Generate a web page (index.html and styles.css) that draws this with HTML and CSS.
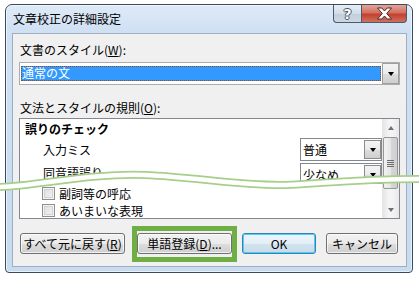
FILE: index.html
```html
<!DOCTYPE html>
<html lang="ja">
<head>
<meta charset="utf-8">
<link rel="stylesheet" href="styles.css">
</head>
<body>
<div class="window">
  <div class="titlebar">
    <span class="title">文章校正の詳細設定</span>
    <div class="caption-btns">
      <div class="cbtn help">?</div>
      <div class="cbtn close">
        <svg width="17" height="13" viewBox="0 0 17 13"><path d="M1.5 1h4.3l2.7 3L11.2 1h4.3l-4.8 5.5 4.8 5.5h-4.3L8.5 9l-2.7 3H1.5l4.8-5.5z" fill="#fff" stroke="#4a2a2a" stroke-width="1"/></svg>
      </div>
    </div>
  </div>
  <div class="client">
    <div class="label">文書のスタイル(<u>W</u>):</div>
    <div class="combo big">
      <div class="combo-field"><span class="sel">通常の文</span></div>
      <div class="combo-btn"><i class="arrow"></i></div>
    </div>
    <div class="label label2">文法とスタイルの規則(<u>O</u>):</div>
    <div class="listbox">
      <div class="list-items">
        <div class="row head">誤りのチェック</div>
        <div class="row opt">
          <span>入力ミス</span>
          <div class="combo small">
            <div class="combo-field"><span>普通</span></div>
            <div class="combo-btn"><i class="arrow"></i></div>
          </div>
        </div>
        <div class="row opt clip">
          <span>同音語誤り</span>
          <div class="combo small">
            <div class="combo-field"><span>少なめ</span></div>
            <div class="combo-btn"><i class="arrow"></i></div>
          </div>
        </div>
        <div class="row chk"><i class="checkbox"></i><span>副詞等の呼応</span></div>
        <div class="row chk last"><i class="checkbox"></i><span>あいまいな表現</span></div>
      </div>
      <div class="scrollbar">
        <div class="sb-btn"><i class="sb-up"></i></div>
        <div class="sb-track">
          <div class="sb-thumb"><i class="grip"></i></div>
        </div>
        <div class="sb-btn"><i class="sb-down"></i></div>
      </div>
    </div>
    <div class="buttons">
      <div class="btn b-reset">すべて元に戻す(<u>R</u>)</div>
      <div class="btn b-word">単語登録(<u>D</u>)...</div>
      <div class="btn b-ok">OK</div>
      <div class="btn b-cancel">キャンセル</div>
    </div>
  </div>
</div>
<svg class="wave" width="419" height="281" viewBox="0 0 419 281">
  <path d="M0 187 C40 185.5 90 173 145 175 C195 177 240 186 285 185 C320 184 350 179 419 179" fill="none" stroke="#a6d08a" stroke-width="8"/>
  <path d="M0 187 C40 185.5 90 173 145 175 C195 177 240 186 285 185 C320 184 350 179 419 179" fill="none" stroke="#ffffff" stroke-width="4.5"/>
</svg>
</body>
</html>
```
FILE: styles.css
```css
* { box-sizing: border-box; }
html, body { margin: 0; padding: 0; background: #fff; }
body {
  width: 419px; height: 281px; position: relative; overflow: hidden;
  font-family: "Noto Sans CJK JP", "Noto Sans", sans-serif;
  font-size: 12px; color: #000;
}
u { text-decoration: underline; text-underline-offset: 1px; }

.window {
  margin: 4px 0 0 5px;
  width: 408px; height: 269px;
  border: 1px solid #3b4b5c;
  border-radius: 7px 7px 4px 4px;
  background: linear-gradient(to bottom, #dfeaf7 0px, #cfe0f3 28px, #c7dbf1 100%);
  padding: 0 5px 5px 6px;
  display: flex; flex-direction: column;
  box-shadow: inset 0 0 0 1px rgba(255,255,255,0.6);
}
.titlebar {
  height: 28px; flex: none;
  display: flex; justify-content: space-between; align-items: flex-start;
}
.title { padding: 6px 0 0 1px; line-height: 16px; font-size: 12px; }
.caption-btns { display: flex; }
.cbtn {
  height: 18px; display: flex; align-items: center; justify-content: center;
  border: 1px solid #4c5a6a; border-top: none;
}
.help {
  width: 28px; border-right: none; border-radius: 0 0 0 4px;
  background: linear-gradient(to bottom, #e6edf5 0%, #d3dde8 50%, #c2cedb 51%, #cdd8e4 100%);
  color: #fff; font-weight: bold; font-size: 14px; font-family: "DejaVu Sans", sans-serif;
  text-shadow: -1px 0 #4a5560, 1px 0 #4a5560, 0 -1px #4a5560, 0 1px #4a5560;
}
.close {
  width: 46px; border-radius: 0 0 4px 0;
  background: linear-gradient(to bottom, #e2a597 0%, #d46f61 45%, #c2412f 55%, #d0705c 100%);
}

.client {
  flex: 1;
  border: 1px solid #9eaebf;
  background: #f0f0f0;
  padding: 8px 6px 0 6px;
}
.label { line-height: 16px; height: 16px; padding-left: 1px; }
.label2 { margin-top: 15px; }

.combo { display: flex; border: 1px solid #abadb3; background: #fff; }
.big { margin-top: 4px; height: 23px; }
.combo-field { flex: 1; padding: 2px 1px; display: flex; align-items: center; }
.sel {
  display: block; width: 100%; height: 15px; line-height: 14px;
  background: #3399ff; color: #fff; padding-left: 1px;
  outline: 1px dotted #9a4a10; outline-offset: -1px;
}
.combo-btn {
  width: 17px; flex: none;
  border: 1px solid #a0a0a0;
  background: linear-gradient(to bottom, #f3f3f3 0%, #ebebeb 50%, #dddddd 51%, #cfcfcf 100%);
  display: flex; align-items: center; justify-content: center;
}
.arrow {
  width: 0; height: 0;
  border-left: 3.5px solid transparent; border-right: 3.5px solid transparent;
  border-top: 4px solid #000;
  margin-top: 1px;
}

.listbox {
  margin-top: 2px; height: 101px;
  border: 1px solid #828790; background: #fff;
  display: flex; overflow: hidden;
}
.list-items { flex: 1; overflow: hidden; }
.row { display: flex; align-items: center; }
.head { height: 19px; padding-left: 5px; font-weight: bold; }
.opt { height: 23px; padding-left: 23px; justify-content: space-between; align-items: flex-start; }
.opt > span { line-height: 23px; }
.opt.clip { overflow: hidden; }
.opt.clip > .combo { margin-top: 2px; }
.small { width: 82px; height: 23px; border-color: #828790; }
.small .combo-field { padding: 0 0 0 2px; }
.small .combo-btn { margin: 1px 0 1px 0; border-color: #8c8c8c; }
.chk { height: 18px; padding-left: 22px; line-height: 15px; }
.chk.last { height: 16px; }
.checkbox {
  width: 13px; height: 13px; margin-right: 4px;
  border: 1px solid #8e8f8f;
  background: linear-gradient(135deg, #dcdcdc 0%, #f5f5f5 100%);
  box-shadow: inset 0 0 0 1px #f4f4f4, inset 0 0 0 2px #d2d2d2;
}

.scrollbar {
  width: 17px; flex: none;
  display: flex; flex-direction: column;
  background: linear-gradient(to right, #e3e3e3, #f4f4f4 40%, #f4f4f4 60%, #e8e8e8);
}
.sb-btn { height: 17px; display: flex; align-items: center; justify-content: center; }
.sb-up, .sb-down {
  width: 0; height: 0;
  border-left: 3.5px solid transparent; border-right: 3.5px solid transparent;
}
.sb-up { border-bottom: 4px solid #707070; }
.sb-down { border-top: 4px solid #707070; }
.sb-track { flex: 1; padding-top: 1px; }
.sb-thumb {
  height: 52px; margin: 0 0 0 1px; width: 15px;
  border: 1px solid #979797; border-radius: 2px;
  background: linear-gradient(to right, #f2f2f2, #e6e6e6 50%, #d6d6d6 51%, #d0d0d0);
  display: flex; align-items: center; justify-content: center;
}
.grip {
  width: 7px; height: 7px;
  background: repeating-linear-gradient(to bottom, #6b6b6b 0 1px, transparent 1px 2px);
}

.buttons { display: flex; margin: 14px 0 0 1px; }
.btn {
  height: 21px; line-height: 19px; text-align: center;
  border: 1px solid #707070; border-radius: 3px;
  background: linear-gradient(to bottom, #f2f2f2 0%, #ebebeb 50%, #dddddd 51%, #cfcfcf 100%);
  box-shadow: inset 0 0 0 1px rgba(255,255,255,0.7);
  flex: none;
}
.b-reset { width: 105px; }
.b-word { width: 95px; margin-left: 12px; position: relative; }
.b-word::after {
  content: ""; position: absolute;
  left: -6px; right: -6px; top: -8px; bottom: -9px;
  border: 5px solid #6fae45;
}
.b-ok {
  width: 74px; margin-left: 10px;
  border-color: #3c7fb1;
  background: linear-gradient(to bottom, #eef6fb 0%, #e3eef6 50%, #d3e3ef 51%, #c8dbea 100%);
  box-shadow: inset 0 0 0 1px #48d1f8;
}
.b-cancel { width: 72px; margin-left: 10px; }

.wave { position: absolute; left: 0; top: 0; pointer-events: none; }
```
